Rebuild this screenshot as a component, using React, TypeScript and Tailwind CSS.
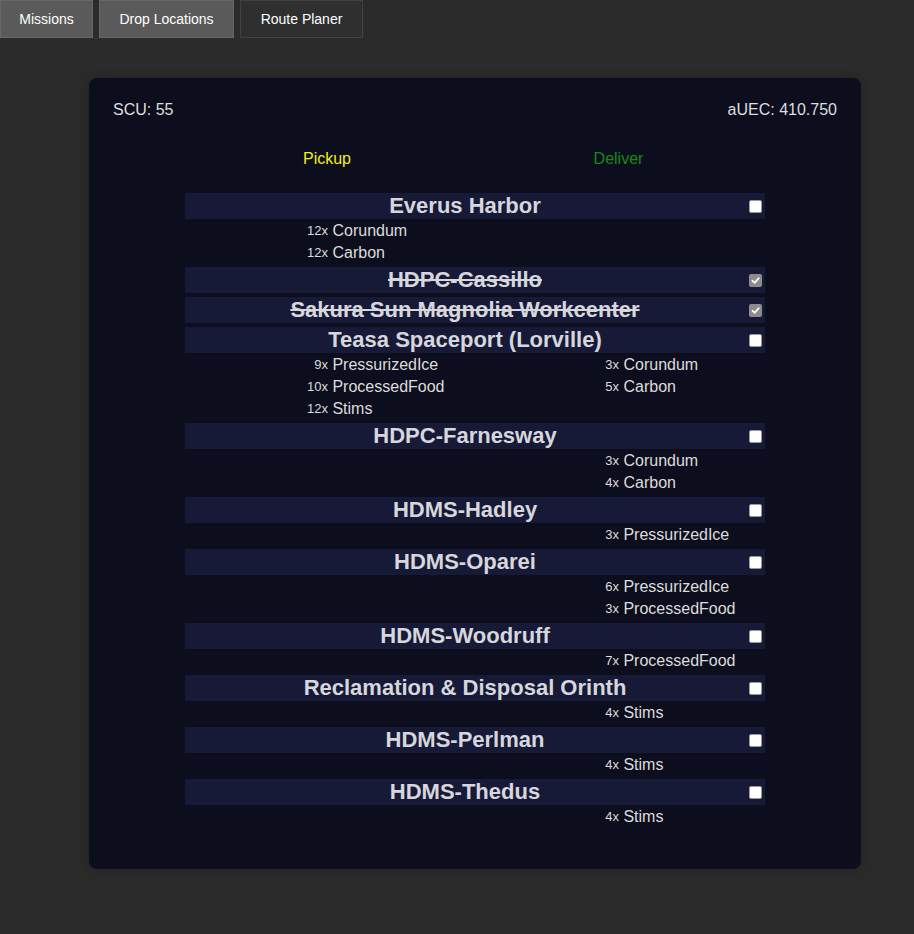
import React from 'react';

type Item = { count: number; name: string };
type Stop = { name: string; done: boolean; pickup: Item[]; deliver: Item[] };

const stops: Stop[] = [
  {
    name: 'Everus Harbor',
    done: false,
    pickup: [
      { count: 12, name: 'Corundum' },
      { count: 12, name: 'Carbon' },
    ],
    deliver: [],
  },
  { name: 'HDPC-Cassillo', done: true, pickup: [], deliver: [] },
  { name: 'Sakura Sun Magnolia Workcenter', done: true, pickup: [], deliver: [] },
  {
    name: 'Teasa Spaceport (Lorville)',
    done: false,
    pickup: [
      { count: 9, name: 'PressurizedIce' },
      { count: 10, name: 'ProcessedFood' },
      { count: 12, name: 'Stims' },
    ],
    deliver: [
      { count: 3, name: 'Corundum' },
      { count: 5, name: 'Carbon' },
    ],
  },
  {
    name: 'HDPC-Farnesway',
    done: false,
    pickup: [],
    deliver: [
      { count: 3, name: 'Corundum' },
      { count: 4, name: 'Carbon' },
    ],
  },
  { name: 'HDMS-Hadley', done: false, pickup: [], deliver: [{ count: 3, name: 'PressurizedIce' }] },
  {
    name: 'HDMS-Oparei',
    done: false,
    pickup: [],
    deliver: [
      { count: 6, name: 'PressurizedIce' },
      { count: 3, name: 'ProcessedFood' },
    ],
  },
  { name: 'HDMS-Woodruff', done: false, pickup: [], deliver: [{ count: 7, name: 'ProcessedFood' }] },
  { name: 'Reclamation & Disposal Orinth', done: false, pickup: [], deliver: [{ count: 4, name: 'Stims' }] },
  { name: 'HDMS-Perlman', done: false, pickup: [], deliver: [{ count: 4, name: 'Stims' }] },
  { name: 'HDMS-Thedus', done: false, pickup: [], deliver: [{ count: 4, name: 'Stims' }] },
];

export default function App() {
  return (
    <div className="min-h-screen bg-[#2b2b2b] font-['Liberation_Sans'] text-[#dcdcdc]">
      {/* Tabs */}
      <div className="flex gap-[6px]">
        <Tab label="Missions" className="w-[93px] bg-[#5a5a5a] border-[#676767]" />
        <Tab label="Drop Locations" className="w-[135px] bg-[#5a5a5a] border-[#676767]" />
        <Tab label="Route Planer" className="w-[123px] bg-[#2f2f2f] border-[#424242]" />
      </div>

      <div className="pt-[40px] pb-[64px]">
        <div className="ml-[89px] w-[772px] rounded-[8px] bg-[#0d0e1d] px-6 pt-[23px] pb-[38px] shadow-[0_0_12px_rgba(0,0,0,0.25)]">
          <div className="flex justify-between text-[16px] leading-[18px] text-[#dedede]">
            <span>SCU: 55</span>
            <span>aUEC: 410.750</span>
          </div>

          <div className="mx-auto mt-[31px] w-[580px] grid grid-cols-[284px_296px] text-[16px] leading-[18px]">
            <span className="text-center text-[#f0f01e]">Pickup</span>
            <span className="pl-[3px] text-center text-[#168a16]">Deliver</span>
          </div>

          <div className="mx-auto mt-[25px] w-[580px]">
            {stops.map(stop => (
              <React.Fragment key={stop.name}>
                <StopBlock stop={stop} />
              </React.Fragment>
            ))}
          </div>
        </div>
      </div>
    </div>
  );
}

// ─── Sub-components ───────────────────────────────────────────────────────────

function Tab({ label, className }: { label: string; className: string }) {
  return (
    <button className={`h-[38px] border font-['Liberation_Sans'] text-[14px] text-white ${className}`}>{label}</button>
  );
}

function StopBlock({ stop }: { stop: Stop }) {
  const lines = Math.max(stop.pickup.length, stop.deliver.length);
  return (
    <div className="mb-[4px]">
      <div className="flex h-[26px] items-center bg-[#161a37]">
        <span
          className={`flex-1 whitespace-nowrap text-center text-[22px] font-bold leading-[26px] text-[#d6d6dc] ${stop.done ? 'line-through' : ''}`}
        >
          {stop.name}
        </span>
        <span className="flex w-[20px] justify-center">
          <Checkbox checked={stop.done} />
        </span>
      </div>
      {Array.from({ length: lines }).map((_, i) => (
        <div key={i} className="grid h-[22px] grid-cols-[143px_146px_145px_146px] items-center">
          <Count item={stop.pickup[i]} />
          <Name item={stop.pickup[i]} />
          <Count item={stop.deliver[i]} />
          <Name item={stop.deliver[i]} />
        </div>
      ))}
    </div>
  );
}

function Count({ item }: { item?: Item }) {
  return <span className="text-right text-[13px] text-[#dcdcdc]">{item ? `${item.count}x` : ''}</span>;
}

function Name({ item }: { item?: Item }) {
  return <span className="whitespace-pre text-[16px] text-[#dcdcdc]">{item ? ` ${item.name}` : ''}</span>;
}

function Checkbox({ checked }: { checked: boolean }) {
  if (checked) {
    return (
      <span className="flex h-[13px] w-[13px] items-center justify-center rounded-[2px] bg-[#8c8c8c]">
        <svg width="9" height="9" viewBox="0 0 10 10" fill="none">
          <path d="M1.5 5.2 L4 7.6 L8.6 2.4" stroke="white" strokeWidth="1.8" strokeLinecap="round" strokeLinejoin="round" />
        </svg>
      </span>
    );
  }
  return <span className="block h-[13px] w-[13px] rounded-[2px] border border-[#9a9a9a] bg-white" />;
}
